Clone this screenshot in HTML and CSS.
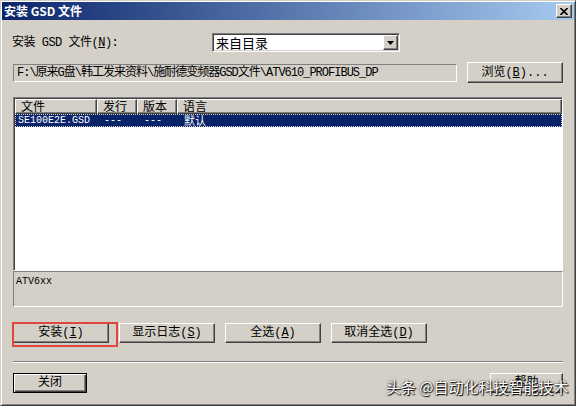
FILE: index.html
```html
<!DOCTYPE html>
<html lang="zh-CN">
<head>
  <meta charset="UTF-8">
  <meta name="viewport" content="width=device-width, initial-scale=1.0">
  <title>安装 GSD 文件</title>
  <link rel="stylesheet" href="styles.css">
</head>
<body>
  <div class="window">
    <div class="titlebar">
      <span class="title">安装 GSD 文件</span>
      <span class="close">
        <svg width="8" height="7" viewBox="0 0 8 7"><path d="M0.5 0 L7.5 7 M7.5 0 L0.5 7" stroke="#000" stroke-width="1.6"/></svg>
      </span>
    </div>

    <div class="content">
      <div class="source-row">
        <label class="source-label">安装 GSD 文件(<u>N</u>):</label>
        <div class="combo">
          <span class="combo-text">来自目录</span>
          <span class="combo-btn">
            <svg width="7" height="4" viewBox="0 0 7 4"><polygon points="0,0 7,0 3.5,4" fill="#000"/></svg>
          </span>
        </div>
      </div>

      <div class="path-row">
        <div class="path-field">F:\原来G盘\韩工发来资料\施耐德变频器GSD文件\ATV610_PROFIBUS_DP</div>
        <button class="btn browse">浏览(<u>B</u>)...</button>
      </div>

      <div class="listview">
        <div class="lv-header">
          <div class="lv-col">文件</div>
          <div class="lv-col">发行</div>
          <div class="lv-col">版本</div>
          <div class="lv-col">语言</div>
        </div>
        <div class="lv-row selected">
          <div class="lv-cell">SE100E2E.GSD</div>
          <div class="lv-cell">---</div>
          <div class="lv-cell">---</div>
          <div class="lv-cell cjk">默认</div>
        </div>
      </div>
      <div class="description">ATV6xx</div>

      <div class="action-row">
        <button class="btn marked">安装(<u>I</u>)</button>
        <button class="btn">显示日志(<u>S</u>)</button>
        <button class="btn">全选(<u>A</u>)</button>
        <button class="btn">取消全选(<u>D</u>)</button>
      </div>

      <div class="separator"></div>

      <div class="bottom-row">
        <button class="btn default">关闭</button>
        <button class="btn help">帮助</button>
      </div>
    </div>

    <div class="watermark">头条 @自动化科技智能技术</div>
  </div>
</body>
</html>
```

FILE: styles.css
```css
body {
  margin: 0;
  background-color: #d4d0c8;
  font-family: "Liberation Mono", "Noto Sans CJK SC", monospace;
  font-size: 12px;
  color: #000;
}

.window {
  position: relative;
  box-sizing: border-box;
  width: 576px;
  height: 406px;
  padding: 1px;
  border: 1px solid;
  border-color: #d4d0c8 #404040 #404040 #d4d0c8;
  box-shadow: inset 1px 1px #fff, inset -1px -1px #808080;
  background-color: #d4d0c8;
}

.titlebar {
  display: flex;
  align-items: center;
  justify-content: space-between;
  height: 18px;
  padding: 0 2px 0 2px;
  background: linear-gradient(to right, #0a246a, #a6caf0);
  color: #fff;
}

.title {
  font-family: "Noto Sans CJK SC", sans-serif;
  font-weight: bold;
  font-size: 12px;
  line-height: 18px;
}

.close {
  display: flex;
  align-items: center;
  justify-content: center;
  box-sizing: border-box;
  width: 16px;
  height: 14px;
  background-color: #d4d0c8;
  border: 1px solid;
  border-color: #fff #404040 #404040 #fff;
  box-shadow: inset -1px -1px #808080;
}

.content {
  padding: 0 11px;
}

/* first row: source label + combo */
.source-row {
  display: flex;
  align-items: center;
  height: 19px;
  margin-top: 13px;
}

.source-label {
  width: 200px;
  margin-left: -1px;
  line-height: 16px;
  letter-spacing: -0.5px;
}

.combo {
  display: flex;
  align-items: center;
  justify-content: space-between;
  box-sizing: border-box;
  width: 188px;
  height: 19px;
  padding: 1px;
  background-color: #fff;
  border: 1px solid;
  border-color: #808080 #fff #fff #808080;
  box-shadow: inset 1px 1px #404040, inset -1px -1px #d4d0c8;
}

.combo-text {
  padding-left: 2px;
  font-family: "Noto Sans CJK SC", sans-serif;
  font-size: 13px;
  line-height: 15px;
}

.combo-btn {
  display: flex;
  align-items: center;
  justify-content: center;
  box-sizing: border-box;
  width: 15px;
  height: 15px;
  background-color: #d4d0c8;
  border: 1px solid;
  border-color: #fff #404040 #404040 #fff;
  box-shadow: inset -1px -1px #808080;
}

/* second row: path + browse */
.path-row {
  display: flex;
  align-items: center;
  justify-content: space-between;
  height: 21px;
  margin-top: 10px;
}

.path-field {
  box-sizing: border-box;
  width: 444px;
  height: 18px;
  padding-left: 3px;
  border: 1px solid;
  border-color: #808080 #fff #fff #808080;
  line-height: 16px;
  letter-spacing: -1px;
  white-space: nowrap;
}

.btn {
  box-sizing: border-box;
  height: 20px;
  padding: 0;
  background-color: #d4d0c8;
  border: 1px solid;
  border-color: #fff #404040 #404040 #fff;
  box-shadow: inset -1px -1px #808080;
  font: inherit;
  line-height: 16px;
  color: #000;
}

.browse {
  width: 96px;
  height: 21px;
}

/* list of gsd files */
.listview {
  box-sizing: border-box;
  height: 174px;
  margin-top: 14px;
  padding: 1px 0 0 1px;
  background-color: #fff;
  border: 1px solid;
  border-color: #808080 #fff #fff #808080;
  box-shadow: inset 1px 1px #404040;
}

.lv-header,
.lv-row {
  display: grid;
  grid-template-columns: 82px 40px 40px 1fr;
}

.lv-header {
  height: 15px;
}

.lv-col {
  box-sizing: border-box;
  padding-left: 5px;
  background-color: #d4d0c8;
  border: 1px solid;
  border-color: #fff #404040 #404040 #fff;
  box-shadow: inset -1px -1px #808080;
  font-family: "Noto Sans CJK SC", sans-serif;
  line-height: 12px;
}

.lv-row {
  height: 13px;
  font-size: 10px;
  line-height: 13px;
}

.lv-row.selected {
  background-color: #0a246a;
  color: #fff;
  outline: 1px dotted #d4d0c8;
  outline-offset: -1px;
}

.lv-cell {
  padding-left: 7px;
}

.lv-cell:first-child {
  padding-left: 3px;
}

.lv-cell.cjk {
  font-family: "Noto Sans CJK SC", sans-serif;
  font-size: 11px;
  line-height: 13px;
}

.description {
  box-sizing: border-box;
  height: 36px;
  padding: 4px 0 0 2px;
  border: 1px solid;
  border-color: #808080 #fff #fff #808080;
  font-size: 10px;
  line-height: 12px;
}

/* install / log / select buttons */
.action-row {
  display: flex;
  gap: 10px;
  margin-top: 16px;
}

.action-row .btn {
  width: 96px;
}

.marked {
  position: relative;
}

.marked::after {
  content: "";
  position: absolute;
  left: -2px;
  top: -2px;
  right: -10px;
  bottom: -5px;
  border: 2px solid #e2443e;
}

.separator {
  box-sizing: border-box;
  height: 2px;
  margin-top: 18px;
  border-top: 1px solid #808080;
  border-bottom: 1px solid #fff;
}

.bottom-row {
  display: flex;
  justify-content: space-between;
  margin-top: 10px;
}

.btn.default {
  width: 74px;
  border-color: #000;
  box-shadow: inset 1px 1px #fff, inset -1px -1px #404040, inset -2px -2px #808080;
}

.btn.help {
  width: 73px;
}

.watermark {
  position: absolute;
  left: 385px;
  top: 377px;
  font-family: "Noto Sans CJK SC", sans-serif;
  font-size: 15px;
  line-height: 17px;
  color: #fff;
  text-shadow: 0 0 2px #000, 1px 1px 1px #000;
  white-space: nowrap;
}
```
